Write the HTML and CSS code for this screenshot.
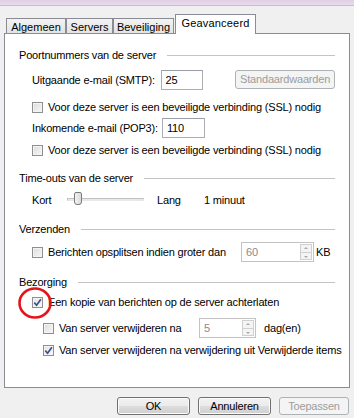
FILE: index.html
```html
<!DOCTYPE html>
<html>
<head>
<meta charset="utf-8">
<link rel="stylesheet" href="styles.css">
</head>
<body>
<div class="titlestrip"></div>
<div class="dialog">
  <div class="tabs">
    <div class="tab t1">Algemeen</div>
    <div class="tab t2">Servers</div>
    <div class="tab t3">Beveiliging</div>
    <div class="tab active">Geavanceerd</div>
  </div>
  <div class="panel">
    <div class="gtitle g1"><span>Poortnummers van de server</span><i class="gline"></i></div>
    <div class="row r-smtp">
      <span class="lbl w130">Uitgaande e-mail (SMTP):</span>
      <div class="input w43">25</div>
      <div class="btn disabled std">Standaardwaarden</div>
    </div>
    <div class="row chk r-ssl1"><span class="cb"></span><span>Voor deze server is een beveiligde verbinding (SSL) nodig</span></div>
    <div class="row r-pop">
      <span class="lbl w130">Inkomende e-mail (POP3):</span>
      <div class="input w43">110</div>
    </div>
    <div class="row chk r-ssl2"><span class="cb"></span><span>Voor deze server is een beveiligde verbinding (SSL) nodig</span></div>

    <div class="gtitle g2"><span>Time-outs van de server</span><i class="gline"></i></div>
    <div class="row r-kort">
      <span class="lbl w35">Kort</span>
      <div class="slider"><div class="track"></div><div class="thumb"></div></div>
      <span class="lbl w47">Lang</span>
      <span>1 minuut</span>
    </div>

    <div class="gtitle g3"><span>Verzenden</span><i class="gline"></i></div>
    <div class="row chk r-split">
      <span class="cb"></span><span class="lbl w193">Berichten opsplitsen indien groter dan</span>
      <div class="spin w73"><span class="val">60</span><div class="spinbtns"><b class="up"></b><b class="down"></b></div></div>
      <span class="unit">KB</span>
    </div>

    <div class="gtitle g4"><span>Bezorging</span><i class="gline"></i></div>
    <div class="row chk r-copy"><span class="cb checked"><svg width="11" height="11" viewBox="0 0 11 11"><path d="M2.3 5.6 L4.6 8.2 L8.9 2.2" fill="none" stroke="#3b4f94" stroke-width="1.7"/></svg></span><span>Een kopie van berichten op de server achterlaten</span></div>
    <div class="row chk sub r-del">
      <span class="cb"></span><span class="lbl w140">Van server verwijderen na</span>
      <div class="spin w57"><span class="val">5</span><div class="spinbtns"><b class="up"></b><b class="down"></b></div></div>
      <span class="unit2">dag(en)</span>
    </div>
    <div class="row chk sub r-del2"><span class="cb checked"><svg width="11" height="11" viewBox="0 0 11 11"><path d="M2.3 5.6 L4.6 8.2 L8.9 2.2" fill="none" stroke="#3b4f94" stroke-width="1.7"/></svg></span><span>Van server verwijderen na verwijdering uit Verwijderde items</span></div>
  </div>
  <div class="buttons">
    <div class="btn w73">OK</div>
    <div class="btn w73">Annuleren</div>
    <div class="btn disabled w70">Toepassen</div>
  </div>
</div>
<svg class="circle" width="40" height="38" viewBox="0 0 40 38"><ellipse cx="20" cy="19" rx="15.5" ry="14.5" fill="none" stroke="#e3141c" stroke-width="2.6"/></svg>
</body>
</html>
```
FILE: styles.css
```css
* { box-sizing: border-box; }
html, body { margin: 0; padding: 0; }
body {
  width: 354px;
  height: 418px;
  overflow: hidden;
  background: #f0f0f0;
  font-family: "Liberation Sans", Arial, sans-serif;
  font-size: 11px;
  letter-spacing: -0.18px;
  color: #000;
  position: relative;
}
.titlestrip {
  height: 6px;
  background: linear-gradient(#e0cfe6, #e9dbee);
  border-bottom: 1px solid #cbbcd2;
}
.dialog { padding: 8px 4px 0 4px; }
.tabs {
  display: flex;
  align-items: flex-end;
  height: 19px;
  padding-left: 2px;
}
.tab {
  height: 15px;
  border: 1px solid #898c95;
  border-bottom: none;
  background: linear-gradient(#f3f3f3, #e3e3e3);
  display: flex;
  align-items: center;
  justify-content: center;
  padding-top: 1px;
  letter-spacing: 0;
}
.t1 { width: 60px; }
.t2 { width: 47px; }
.t3 { width: 61px; }
.tab.active {
  width: 81px;
  height: 20px;
  margin-left: 1px;
  margin-bottom: -1px;
  background: #fff;
  position: relative;
  z-index: 2;
  padding-top: 0;
  padding-bottom: 4px;
  letter-spacing: 0.2px;
}
.panel {
  height: 355px;
  border: 1px solid #898c95;
  background: #fff;
  padding: 14px 14px 0 14px;
  display: flex;
  flex-direction: column;
}
.gtitle {
  height: 14px;
  display: flex;
  align-items: center;
}
.gline {
  flex: 1;
  height: 1px;
  background: #c4c4c4;
  margin-left: 11px;
  margin-right: 0;
}
.row {
  display: flex;
  align-items: center;
  padding-left: 13px;
  white-space: nowrap;
}
.row.chk { height: 14px; }
.row.sub { padding-left: 24px; }
.r-smtp { height: 20px; margin-top: 8px; }
.r-ssl1 { margin-top: 10px; }
.r-pop { height: 20px; margin-top: 4px; }
.r-ssl2 { margin-top: 5px; }
.g2 { margin-top: 14px; }
.r-kort { height: 16px; margin-top: 7px; }
.g3 { margin-top: 14px; }
.row.r-split { height: 20px; margin-top: 6px; }
.g4 { margin-top: 13px; }
.r-copy { margin-top: 6px; }
.row.r-del { height: 20px; margin-top: 9px; }
.r-del2 { margin-top: 5px; }

.lbl { display: inline-block; }
.w130 { width: 130px; }
.w35 { width: 35px; }
.w47 { width: 47px; }
.w193 { width: 193px; }
.w140 { width: 140px; }
.w43 { width: 43px; }
.w57 { width: 57px; }
.w73 { width: 73px; }
.w70 { width: 70px; }

.input {
  height: 20px;
  border: 1px solid #abadb3;
  border-top-color: #9a9ea8;
  background: #fff;
  padding: 0 4px;
  display: flex;
  align-items: center;
}
.cb {
  width: 11px;
  height: 11px;
  flex: none;
  border: 1px solid #8e8f8f;
  background: linear-gradient(135deg, #dcdcdc, #f8f8f8);
  box-shadow: inset 0 0 0 1px #f4f4f4;
  margin-right: 5px;
  position: relative;
}
.cb svg { position: absolute; left: -1px; top: -1px; }
.cb.checked { background: linear-gradient(135deg, #e4e4e4, #fafafa); }

.btn {
  height: 19px;
  border: 1px solid #707070;
  border-radius: 3px;
  background: linear-gradient(#f2f2f2 0%, #ebebeb 50%, #dddddd 51%, #cfcfcf 100%);
  box-shadow: inset 0 0 0 1px #fbfbfb;
  display: flex;
  align-items: center;
  justify-content: center;
}
.btn.disabled {
  border-color: #adb2b5;
  background: #f4f4f4;
  color: #9c9c9c;
  box-shadow: none;
}
.std { width: 101px; margin-left: 32px; margin-top: -2px; }

.slider { width: 77px; height: 16px; position: relative; margin-right: 13px; }
.track {
  position: absolute; left: 0; right: 0; top: 6px; height: 3px;
  background: #e7eaea; border: 1px solid #c1c1c1; border-right-color: #e0e0e0; border-bottom-color: #e8e8e8;
}
.thumb {
  position: absolute; left: 7px; top: 0; width: 8px; height: 13px;
  border: 1px solid #7b7b7b; border-radius: 2px 2px 3px 3px;
  background: linear-gradient(90deg, #f3f3f3, #dadada);
}

.spin {
  height: 20px;
  border: 1px solid #c3c3c3;
  background: #fff;
  display: flex;
  align-items: center;
  color: #8a8a8a;
  padding-left: 4px;
}
.spin .val { flex: 1; }
.spinbtns {
  width: 12px;
  height: 16px;
  margin-right: 1px;
  display: flex;
  flex-direction: column;
}
.spinbtns b {
  flex: 1;
  border: 1px solid #d0d0d0;
  background: #f4f4f4;
  position: relative;
}
.spinbtns b.up { border-bottom: none; }
.spinbtns b.up::after, .spinbtns b.down::after {
  content: "";
  position: absolute;
  left: 3px;
  width: 0; height: 0;
  border-left: 2px solid transparent;
  border-right: 2px solid transparent;
}
.spinbtns b.up::after { top: 2px; border-bottom: 2px solid #a9a9a9; }
.spinbtns b.down::after { top: 3px; border-top: 2px solid #a9a9a9; }
.unit { margin-left: 2px; }
.unit2 { margin-left: 8px; }

.buttons {
  display: flex;
  justify-content: flex-end;
  gap: 8px;
  margin-top: 9px;
  padding-right: 1px;
}
.buttons .btn { height: 18px; }

.circle {
  position: absolute;
  left: 15px;
  top: 284px;
}
```
